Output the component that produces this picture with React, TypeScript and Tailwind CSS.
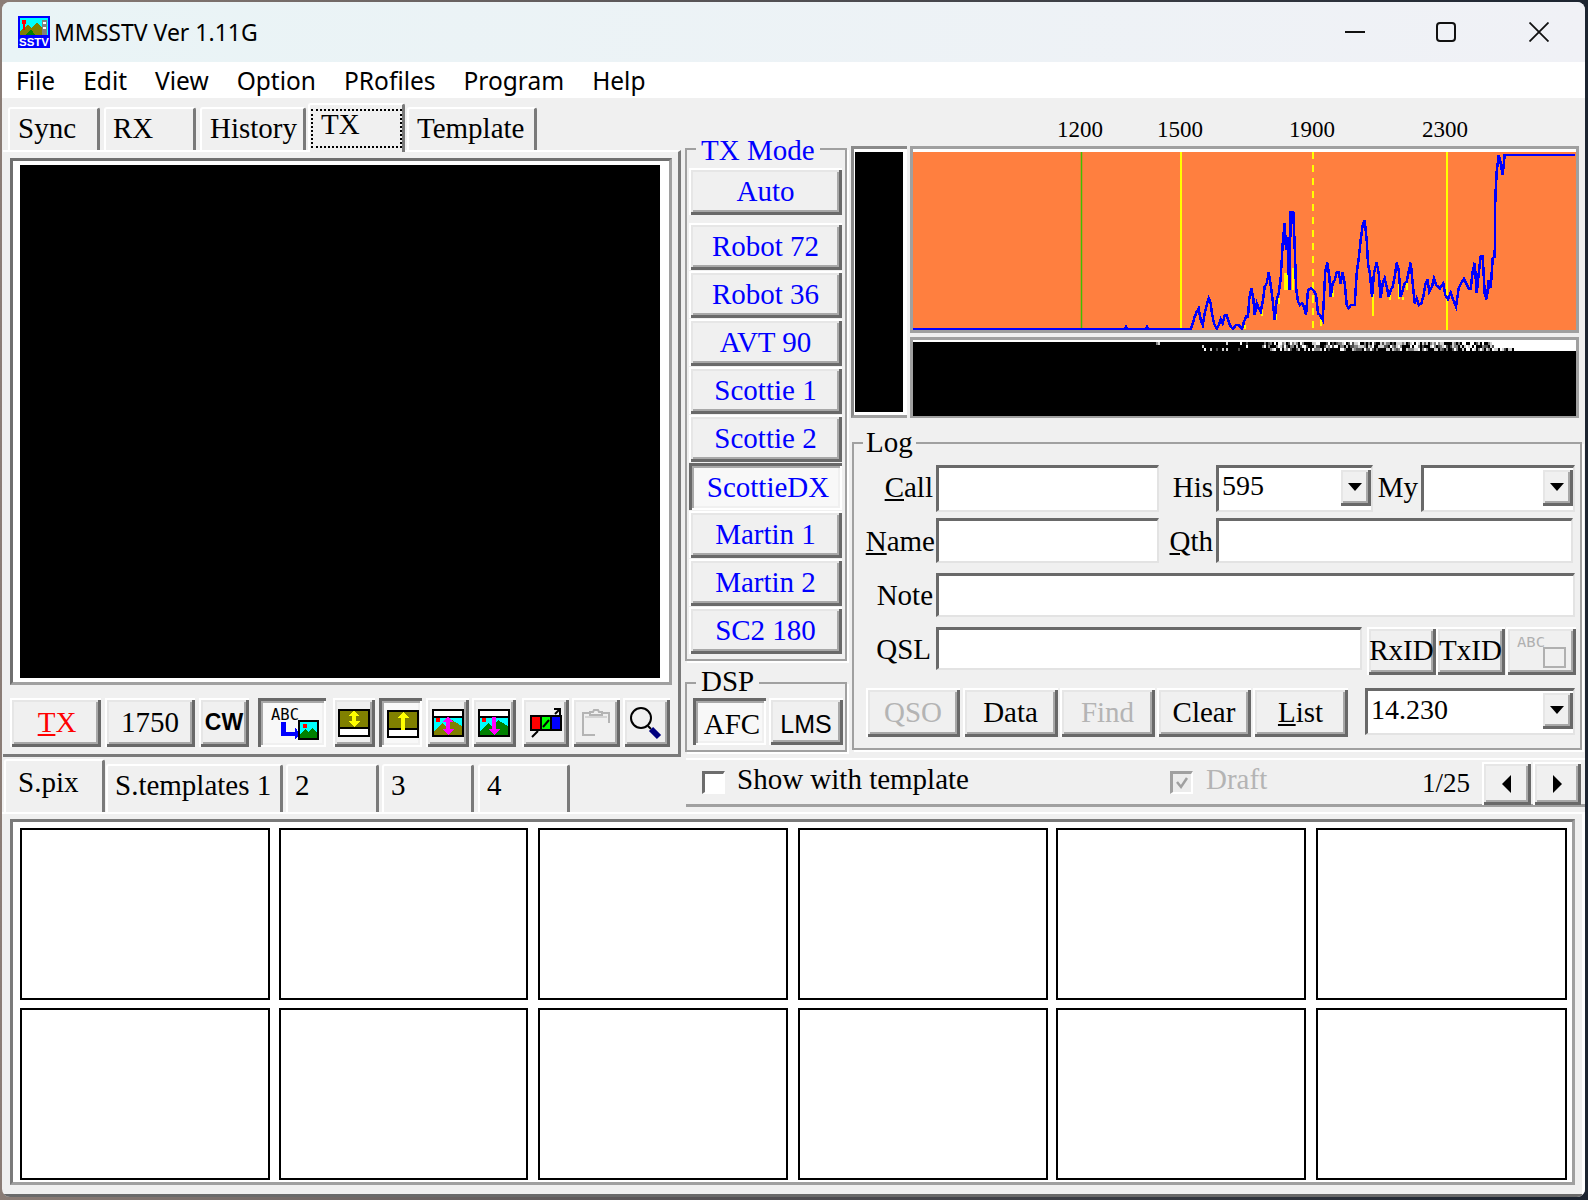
import React from "react";

const raised =
  "bg-[#f0f0f0] shadow-[inset_2px_2px_0_#ffffff,inset_-3px_-3px_0_#696969,inset_4px_4px_0_#e6e6e6,inset_-5px_-5px_0_#a8a8a8]";
const pressed =
  "bg-[#f8f8f8] shadow-[inset_3px_3px_0_#696969,inset_-2px_-2px_0_#ffffff,inset_5px_5px_0_#a8a8a8,inset_-4px_-4px_0_#f0f0f0] pl-[5px] pt-[3px]";
const inset = "bg-white border-t-[3px] border-l-[3px] border-t-[#696969] border-l-[#696969] border-b-2 border-r-2 border-b-[#e3e3e3] border-r-[#e3e3e3]";
const tabBase = "border-t-2 border-l-2 border-t-white border-l-white border-r-[3px] border-r-[#7a7a7a] rounded-t-[3px] flex items-center";
const groupBox = "relative border-2 border-[#a0a0a0] shadow-[2px_2px_0_#ffffff]";
const serif = "font-['Liberation_Serif',serif]";

function Btn({ cls, children, down }: { cls: string; children?: React.ReactNode; down?: boolean }) {
  return <div className={`${cls} ${down ? pressed : raised} flex items-center justify-center shrink-0`}>{children}</div>;
}

function Tri({ dir }: { dir: "down" | "left" | "right" }) {
  const pts = dir === "down" ? "0,0 14,0 7,8" : dir === "left" ? "9,0 9,18 0,9" : "0,0 0,18 9,9";
  const w = dir === "down" ? 14 : 9;
  const h = dir === "down" ? 8 : 18;
  return (
    <svg width={w} height={h} viewBox={`0 0 ${w} ${h}`}>
      <polygon points={pts} fill="#000" />
    </svg>
  );
}

function Combo({ cls, value, textCls }: { cls: string; value?: string; textCls?: string }) {
  return (
    <div className={`${cls} ${inset} flex justify-between shrink-0`}>
      <span className={`pl-[3px] text-[28px] leading-[36px] ${textCls ?? ""}`}>{value}</span>
      <div className={`${raised} w-[32px] h-[38px] flex items-center justify-center`}>
        <Tri dir="down" />
      </div>
    </div>
  );
}

function Label({ cls, children }: { cls: string; children: React.ReactNode }) {
  return <div className={`${cls} text-right shrink-0 leading-[44px]`}>{children}</div>;
}

function Frame({ band, top }: { band: string; top?: boolean }) {
  return (
    <g>
      <rect x="0" y="0" width="32" height="28" fill="#000" />
      <rect x="2" y="2" width="28" height="24" fill={band} />
      {top ? (
        <>
          <rect x="2" y="2" width="28" height="5" fill="#fff" />
          <rect x="2" y="7" width="28" height="2" fill="#000" />
        </>
      ) : (
        <>
          <rect x="2" y="20" width="28" height="6" fill="#fff" />
          <rect x="2" y="18" width="28" height="2" fill="#000" />
        </>
      )}
    </g>
  );
}

function IconAbc() {
  return (
    <svg width="48" height="32" viewBox="0 0 48 32" shapeRendering="crispEdges" className="overflow-visible">
      <text x="0" y="12" fontFamily="DejaVu Sans Mono, monospace" fontSize="15" fill="#000" textLength="28" lengthAdjust="spacingAndGlyphs">ABC</text>
      <path d="M10 14h5v10h9v-5l5 7.500-5 5.500v-4H10z" fill="#0000ff" />
      <rect x="27" y="12" width="21" height="20" fill="#000" />
      <rect x="29" y="14" width="17" height="16" fill="#00ffff" />
      <polygon points="29,30 29,26 34,21 37,24 41,20 46,25 46,30" fill="#008000" />
      <rect x="32" y="16" width="4" height="4" fill="#ff0000" />
    </svg>
  );
}

function IconDouble({ both }: { both?: boolean }) {
  return (
    <svg width="32" height="28" viewBox="0 0 32 28" shapeRendering="crispEdges">
      <Frame band="#808000" top={false} />
      <path d={both ? "M16 2l6 5h-4v5h4l-6 6-6-6h4V7h-4z" : "M16 2l6 6h-4v12h-4V8h-4z"} fill="#ffff00" />
    </svg>
  );
}

function IconPic({ green, both }: { green?: boolean; both?: boolean }) {
  return (
    <svg width="32" height="28" viewBox="0 0 32 28" shapeRendering="crispEdges">
      <Frame band="#00ffff" top />
      <polygon points="2,26 2,23 10,14 14,18 20,11 30,17 30,26" fill={green ? "#008000" : "#808000"} />
      <rect x="4" y="9" width="4" height="4" fill="#ff0000" />
      <path d={both ? "M16 8l6 5h-4v7h4l-6 6-6-6h4v-7h-4z" : "M14 8h4v12h4l-6 6-6-6h4z"} fill="#ff00ff" />
    </svg>
  );
}

function IconRgb() {
  return (
    <svg width="34" height="32" viewBox="0 0 34 32">
      <g shapeRendering="crispEdges">
        <rect x="1" y="8" width="32" height="16" fill="#000" />
        <rect x="3" y="10" width="8" height="12" fill="#ff0000" />
        <rect x="13" y="10" width="8" height="12" fill="#00ff00" />
        <rect x="23" y="10" width="8" height="12" fill="#0000ff" />
      </g>
      <path d="M3 30L9 24M14 20L20 13M26 7L31 2M25 2h6v6" fill="none" stroke="#000" strokeWidth="2" />
    </svg>
  );
}

function IconClip() {
  return (
    <svg width="32" height="28" viewBox="0 0 32 28" fill="none" stroke="#b4b4b4" strokeWidth="2">
      <path d="M10 4H3v22h12M22 4h7v10" />
      <path d="M10 6V3h3l1-2h4l1 2h3v3z" />
      <path d="M5 8h22" stroke="#d4d4d4" />
    </svg>
  );
}

function IconZoom() {
  return (
    <svg width="34" height="34" viewBox="0 0 34 34" className="-ml-[3px]">
      <circle cx="13" cy="12" r="10" fill="none" stroke="#000" strokeWidth="2" />
      <path d="M20 20l3 3" stroke="#000" strokeWidth="2" />
      <path d="M23 23l8 8" stroke="#000080" strokeWidth="6" />
    </svg>
  );
}

function IconAbcDisabled() {
  return (
    <svg width="54" height="34" viewBox="0 0 54 34" className="ml-[3px] overflow-visible">
      <text x="1" y="13" fontFamily="DejaVu Sans Mono, monospace" fontSize="14" fill="#b0b0b0" textLength="28" lengthAdjust="spacingAndGlyphs">ABC</text>
      <rect x="28" y="14" width="21" height="19" fill="none" stroke="#b0b0b0" strokeWidth="2" />
    </svg>
  );
}

function AppIcon() {
  return (
    <svg width="32" height="32" viewBox="0 0 32 32" shapeRendering="crispEdges" className="shrink-0 overflow-visible">
      <rect width="32" height="32" fill="#0000ff" />
      <rect x="2" y="2" width="28" height="17" fill="#00ffff" />
      <polygon points="2,19 2,15 10,9 14,12 19,6 24,12 24,19" fill="#808000" />
      <polygon points="8,19 13,13 17,19" fill="#008000" />
      <rect x="4" y="4" width="4" height="4" fill="#ff0000" />
      <rect x="5" y="8" width="2" height="6" fill="#ff0000" />
      <rect x="24" y="4" width="5" height="15" fill="#808080" />
      <rect x="25" y="6" width="3" height="2" fill="#fff" />
      <rect x="25" y="11" width="3" height="2" fill="#fff" />
      <text x="1" y="30" fontFamily="Liberation Sans, sans-serif" fontWeight="700" fontSize="11" fill="#fff" textLength="30" lengthAdjust="spacingAndGlyphs">SSTV</text>
    </svg>
  );
}

const zoomPts: [number, number][] = [
  [0,567],[32,567],[38,550],[44,530],[50,515],[56,505],[62,540],[68,555],[74,520],[80,495],[86,475],[92,490],[96,520],[102,550],[110,567],[116,555],[122,538],[128,550],[134,525],[140,525],[146,545],[152,560],[160,567],[168,555],[176,555],[186,567],[192,545],[198,530],[204,530],[208,475],[214,445],[220,475],[224,525],[230,490],[236,505],[242,515],[248,485],[254,440],[260,430],[266,398],[272,435],[278,480],[284,540],[290,480],[296,460],[302,415],[308,310],[314,248],[318,330],[322,290],[326,400],[328,450],[332,218],[340,218],[344,320],[348,440],[354,485],[360,495],[366,490],[372,500],[378,525],[384,450],[392,445],[400,450],[408,465],[414,520],[420,525],[428,540],[432,470],[436,392],[442,368],[448,410],[452,470],[458,430],[464,420],[470,398],[476,398],[482,430],[488,398],[494,430],[500,495],[506,505],[512,495],[524,495],[530,400],[536,355],[542,300],[548,255],[554,240],[560,300],[564,370],[570,402],[576,470],[582,400],[590,368],[596,400],[602,475],[608,430],[614,415],[620,440],[626,470],[632,450],[638,440],[644,410],[650,368],[656,390],[662,470],[668,450],[674,430],[680,425],[686,395],[692,368],[698,430],[704,490],[710,475],[716,495],[724,490],[730,470],[736,435],[742,418],[748,455],[756,440],[762,416],[768,435],[780,445],[790,430],[796,465],[804,478],[812,458],[820,480],[828,500],[836,445],[844,428],[852,416],[858,430],[866,445],[872,445],[878,395],[884,368],[890,460],[896,400],[902,350],[908,350],[914,460],[920,478],[926,420],[932,445],[938,355],[944,350],[946,175],[950,95],[956,45],[962,70],[968,105],[974,45],[1184,45],
];
const toX = (p: number) => 1180 + p / 3;
const toY = (p: number) => 140 + p / 3;
const chartLine =
  "913,329 1125,329 1126,327 1127,329 1146,329 1147,327 1148,329 " +
  zoomPts.map(([x, y]) => `${toX(x).toFixed(1)},${toY(y).toFixed(1)}`).join(" ");
const yellowBits: [number, number, number][] = [
  [578, 450, 528], [316, 398, 450], [322, 398, 450], [338, 385, 450], [424, 525, 558], [296, 475, 492], [288, 515, 540],
  [658, 415, 478], [630, 460, 480], [668, 470, 480], [245, 510, 528], [458, 450, 470], [682, 425, 450], [152, 560, 568], [194, 555, 568], [828, 495, 510], [398, 470, 490],
];

function Spectrum() {
  return (
    <svg width="663" height="178" viewBox="913 152 663 178" className="block bg-[#ff7f3f]">
      <line x1="1081.500" y1="152" x2="1081.500" y2="330" stroke="#3fbf00" strokeWidth="1.500" />
      <line x1="1181" y1="152" x2="1181" y2="330" stroke="#ffff00" strokeWidth="2" />
      <line x1="1313" y1="152" x2="1313" y2="330" stroke="#ffff00" strokeWidth="2" strokeDasharray="7 6" />
      <line x1="1447" y1="152" x2="1447" y2="330" stroke="#ffff00" strokeWidth="2" />
      {yellowBits.map(([x, a, b], i) => (
        <line key={i} x1={toX(x)} x2={toX(x)} y1={toY(a)} y2={toY(b)} stroke="#ffff00" strokeWidth="2" shapeRendering="crispEdges" />
      ))}
      <polyline points={chartLine} fill="none" stroke="#0000ff" strokeWidth="2.500" strokeLinejoin="miter" shapeRendering="crispEdges" />
    </svg>
  );
}

function Waterfall() {
  const cells: React.ReactNode[] = [];
  let seed = 12345;
  const rnd = () => {
    seed = (seed * 1103515 + 12345) & 0x7fffffff;
    return seed / 0x7fffffff;
  };
  const shades = ["#ffffff", "#d0d0d0", "#808080", "#505050"];
  for (let x = 1020; x < 1576; x += 2) {
    for (let y = 0; y < 9; y += 3) {
      let p = 0;
      if (x < 1200) p = y === 0 ? 0.03 : 0.01;
      else if (x < 1263) p = 0.18;
      else if (x < 1290) p = 0.6;
      else if (x < 1493) p = 0.65;
      else p = 1;
      if (x >= 1493 && y === 6 && x < 1515) p = 0.6;
      if (rnd() < p) {
        const fill = p === 1 ? "#ffffff" : shades[Math.floor(rnd() * 4)];
        cells.push(<rect key={`${x}-${y}`} x={x - 913} y={y} width="2" height="3" fill={fill} />);
      }
    }
  }
  return (
    <svg width="663" height="74" viewBox="0 0 663 74" className="block bg-black" shapeRendering="crispEdges">
      {cells}
    </svg>
  );
}

const modes = ["Robot 72", "Robot 36", "AVT 90", "Scottie 1", "Scottie 2", "ScottieDX", "Martin 1", "Martin 2", "SC2 180"];

const cellClasses = ["w-[250px]", "w-[249px] ml-[9px]", "w-[250px] ml-[10px]", "w-[250px] ml-[10px]", "w-[250px] ml-[8px]", "w-[251px] ml-[10px]"];

function Checkbox({ disabled }: { disabled?: boolean }) {
  return (
    <div className={`w-[23px] h-[23px] shrink-0 border-t-[3px] border-l-[3px] border-b-2 border-r-2 border-b-white border-r-white flex items-center justify-center ${disabled ? "bg-[#ececec] border-t-[#a0a0a0] border-l-[#a0a0a0]" : "bg-white border-t-[#6d6d6d] border-l-[#6d6d6d]"}`}>
      {disabled && (
        <svg width="14" height="14" viewBox="0 0 14 14">
          <path d="M2 6l4 5 6-9" fill="none" stroke="#a0a0a0" strokeWidth="2.500" />
        </svg>
      )}
    </div>
  );
}

export default function App() {
  return (
    <div className={`w-[1588px] h-[1200px] pt-[2px] pl-[2px] pr-[3px] pb-[3px] bg-linear-to-r from-[#8b7d76] to-[#1c2430] overflow-hidden ${serif} text-[29px] text-black`}>
      <div className="h-full flex flex-col rounded-[8px] overflow-hidden bg-[#f0f0f0]">
        {/* title bar */}
        <div className="h-[60px] shrink-0 flex items-center bg-linear-to-r from-[#e9f4f6] to-[#f0f1f6] pl-[16px] pr-[36px] font-['Noto_Sans',sans-serif]">
          <AppIcon />
          <span className="ml-[4px] text-[23px] leading-none">MMSSTV Ver 1.11G</span>
          <div className="ml-auto flex items-center">
            <svg width="20" height="20" viewBox="0 0 20 20"><path d="M0 10h20" stroke="#111" strokeWidth="2" /></svg>
            <svg width="20" height="20" viewBox="0 0 20 20" className="ml-[71px]"><rect x="1" y="1" width="18" height="18" rx="3" fill="none" stroke="#111" strokeWidth="2" /></svg>
            <svg width="20" height="20" viewBox="0 0 20 20" className="ml-[73px]"><path d="M0.500 0.500l19 19M19.500 0.500l-19 19" stroke="#111" strokeWidth="1.800" /></svg>
          </div>
        </div>
        {/* menu */}
        <div className="h-[36px] shrink-0 bg-white flex items-center pl-[14px] pt-[2px] font-['Noto_Sans',sans-serif] text-[24.500px] leading-none">
          <span>File</span>
          <span className="ml-[28px]">Edit</span>
          <span className="ml-[28px]">View</span>
          <span className="ml-[28px]">Option</span>
          <span className="ml-[28px]">PRofiles</span>
          <span className="ml-[28px]">Program</span>
          <span className="ml-[28px]">Help</span>
        </div>

        {/* upper */}
        <div className="h-[659px] shrink-0 flex">
          {/* left */}
          <div className="w-[681px] shrink-0">
            <div className="h-[52px] pl-[6px] flex items-end">
              <div className={`${tabBase} w-[92px] h-[43px] pl-[8px] pb-[2px]`}>Sync</div>
              <div className={`${tabBase} w-[92px] h-[43px] ml-[4px] pl-[7px] pb-[2px]`}>RX</div>
              <div className={`${tabBase} w-[106px] h-[43px] ml-[4px] pl-[8px] pb-[2px]`}>History</div>
              <div className={`${tabBase} w-[97px] h-[49px] ml-[2px] -mb-[2px] pl-[1px] relative z-10 bg-[#f0f0f0]`}>
                <div className="w-[92px] h-[39px] border-2 border-dotted border-black pl-[8px] leading-[26px]">TX</div>
              </div>
              <div className={`${tabBase} w-[130px] h-[43px] ml-[2px] pl-[8px] pb-[2px]`}>Template</div>
            </div>
            <div className="ml-[1px] w-[678px] h-[607px] border-t-2 border-t-white border-r-[3px] border-r-[#7a7a7a] border-b-[3px] border-b-[#7a7a7a] pl-[7px] pt-[6px]">
              <div className="w-[662px] h-[527px] bg-white border-t-[3px] border-l-[3px] border-t-[#6f6f6f] border-l-[#6f6f6f] border-r-[3px] border-b-[3px] border-r-[#a0a0a0] border-b-[#a0a0a0] pl-[7px] pt-[4px]">
                <div className="w-[640px] h-[513px] bg-black" />
              </div>
              <div className="mt-[13px] flex h-[49px]">
                <Btn cls="w-[91px] h-[49px]"><span className="text-[#ff0000] pl-[3px]"><span className="underline">T</span>X</span></Btn>
                <Btn cls="w-[90px] h-[49px] ml-[4px]">1750</Btn>
                <Btn cls="w-[50px] h-[49px] ml-[4px]"><span className="font-['Liberation_Sans',sans-serif] font-bold text-[23px]">CW</span></Btn>
                <Btn cls="w-[68px] h-[49px] ml-[9px]" down><IconAbc /></Btn>
                <Btn cls="w-[42px] h-[49px] ml-[7px]"><IconDouble both /></Btn>
                <Btn cls="w-[43px] h-[49px] ml-[4px]" down><IconDouble /></Btn>
                <Btn cls="w-[43px] h-[49px] ml-[4px]"><IconPic both /></Btn>
                <Btn cls="w-[44px] h-[49px] ml-[3px]"><IconPic green /></Btn>
                <Btn cls="w-[47px] h-[49px] ml-[6px]"><IconRgb /></Btn>
                <Btn cls="w-[48px] h-[49px] ml-[3px]"><IconClip /></Btn>
                <Btn cls="w-[47px] h-[49px] ml-[3px]"><IconZoom /></Btn>
              </div>
            </div>
          </div>

          {/* mid */}
          <div className="w-[162px] ml-[2px] shrink-0 pt-[50px]">
            <div className={`${groupBox} h-[513px] pt-[18px] pl-[2px]`}>
              <div className="absolute left-[9px] -top-[17px] px-[5px] bg-[#f0f0f0] leading-[34px] text-[#0000ff]">TX Mode</div>
              <Btn cls="w-[153px] h-[47px]"><span className="text-[#0000ff]">Auto</span></Btn>
              <div className="mt-[8px] flex flex-col gap-[1px]">
                {modes.map((m) => (
                  <Btn key={m} cls="w-[153px] h-[47px]" down={m === "ScottieDX"}>
                    <span className="text-[#0000ff]">{m}</span>
                  </Btn>
                ))}
              </div>
            </div>
            <div className={`${groupBox} h-[70px] mt-[21px] pt-[14px] pl-[6px] flex`}>
              <div className="absolute left-[9px] -top-[20px] px-[5px] bg-[#f0f0f0] leading-[34px]">DSP</div>
              <Btn cls="w-[73px] h-[47px]" down><span className="pt-[3px]">AFC</span></Btn>
              <Btn cls="w-[74px] h-[47px] ml-[3px]"><span className="font-['Liberation_Sans',sans-serif] text-[25px] pt-[6px]">LMS</span></Btn>
            </div>
          </div>

          {/* right */}
          <div className="ml-[4px] w-[731px] shrink-0">
            <div className="h-[48px] pt-[16px] flex text-[23px] leading-[31px]">
              <span className="ml-[206px] w-[47px]">1200</span>
              <span className="ml-[53px] w-[47px]">1500</span>
              <span className="ml-[85px] w-[47px]">1900</span>
              <span className="ml-[86px] w-[47px]">2300</span>
            </div>
            <div className="flex h-[272px]">
              <div className="w-[56px] h-[272px] bg-white border-t-[3px] border-l-[3px] border-[#8a8a8a] border-r-0 border-b-[3px] border-b-[#a0a0a0] pt-[3px] pl-[1px]">
                <div className="w-[48px] h-[260px] bg-black" />
              </div>
              <div className="ml-[3px] w-[669px]">
                <div className="h-[187px] bg-white border-[3px] border-[#a0a0a0] pt-[3px]">
                  <Spectrum />
                </div>
                <div className="mt-[4px] h-[81px] bg-white border-[3px] border-[#a0a0a0] border-b-2 pt-[2px]">
                  <Waterfall />
                </div>
              </div>
            </div>

            <div className={`${groupBox} ml-[1px] mt-[24px] w-[730px] h-[308px] pt-[21px]`}>
              <div className="absolute left-[9px] -top-[19px] px-[3px] bg-[#f0f0f0] leading-[34px]">Log</div>
              <div className="flex h-[47px]">
                <Label cls="w-[82px] pr-[3px]"><span className="underline">C</span>all</Label>
                <div className={`${inset} w-[223px] h-[47px] shrink-0`} />
                <Label cls="w-[57px] pr-[3px]">His</Label>
                <Combo cls="w-[157px] h-[47px]" value="595" textCls="pt-0" />
                <Label cls="w-[48px] pr-[3px]">My</Label>
                <Combo cls="w-[154px] h-[47px]" />
              </div>
              <div className="flex h-[45px] mt-[6px]">
                <Label cls="w-[82px] pr-[1px] pt-[1px]"><span className="underline">N</span>ame</Label>
                <div className={`${inset} w-[223px] h-[45px] shrink-0`} />
                <Label cls="w-[57px] pr-[3px] pt-[1px]"><span className="underline">Q</span>th</Label>
                <div className={`${inset} w-[357px] h-[45px] shrink-0`} />
              </div>
              <div className="flex h-[44px] mt-[10px]">
                <Label cls="w-[82px] pr-[3px]">Note</Label>
                <div className={`${inset} w-[639px] h-[44px] shrink-0`} />
              </div>
              <div className="flex h-[48px] mt-[10px]">
                <Label cls="w-[82px] pr-[5px]">QSL</Label>
                <div className={`${inset} w-[426px] h-[43px] shrink-0`} />
                <Btn cls="w-[69px] h-[48px] ml-[5px]">RxID</Btn>
                <Btn cls="w-[69px] h-[48px]">TxID</Btn>
                <Btn cls="w-[70px] h-[48px] ml-[1px]"><IconAbcDisabled /></Btn>
              </div>
              <div className="flex h-[49px] mt-[13px] ml-[12px]">
                <Btn cls="w-[94px] h-[49px]"><span className="text-[#b4b4b4]">QSO</span></Btn>
                <Btn cls="w-[95px] h-[49px] ml-[3px]">Data</Btn>
                <Btn cls="w-[95px] h-[49px] ml-[2px]"><span className="text-[#b4b4b4]">Find</span></Btn>
                <Btn cls="w-[94px] h-[49px] ml-[2px]">Clear</Btn>
                <Btn cls="w-[95px] h-[49px] ml-[2px]"><span><span className="underline">L</span>ist</span></Btn>
                <Combo cls="w-[210px] h-[47px] ml-[17px]" value="14.230" textCls="pt-[1px]" />
              </div>
            </div>
          </div>
        </div>

        {/* second row: lower tabs and options */}
        <div className="h-[55px] shrink-0 flex">
          <div className="w-[684px] shrink-0 flex items-end pl-[2px]">
            <div className={`${tabBase} w-[101px] h-[53px] pl-[12px] pb-[8px]`}>S.pix</div>
            <div className={`${tabBase} w-[177px] h-[48px] ml-[1px] pl-[7px] pb-[6px]`}>S.templates 1</div>
            <div className={`${tabBase} w-[93px] h-[48px] ml-[3px] pl-[7px] pb-[6px]`}>2</div>
            <div className={`${tabBase} w-[92px] h-[48px] ml-[3px] pl-[7px] pb-[6px]`}>3</div>
            <div className={`${tabBase} w-[92px] h-[48px] ml-[4px] pl-[7px] pb-[6px]`}>4</div>
          </div>
          <div className="w-[899px] h-[49px] mt-[1px] border-t-2 border-t-white border-b-[3px] border-b-[#a0a0a0] flex items-center pl-[16px]">
            <Checkbox />
            <span className="ml-[12px] w-[232px] shrink-0 pb-[4px]">Show with template</span>
            <div className="ml-[201px]"><Checkbox disabled /></div>
            <span className="ml-[13px] w-[63px] shrink-0 text-[#b4b4b4] pb-[4px]">Draft</span>
            <span className="ml-[153px] w-[48px] shrink-0 text-[27px] pt-[3px]">1/25</span>
            <Btn cls="w-[49px] h-[43px] ml-[12px] mt-[3px]"><Tri dir="left" /></Btn>
            <Btn cls="w-[48px] h-[43px] ml-[2px] mt-[3px]"><Tri dir="right" /></Btn>
          </div>
        </div>

        {/* bottom */}
        <div className="flex-1 border-t-2 border-t-white border-b-[3px] border-b-[#6a6a6a] border-r-[3px] border-r-white pl-[8px] pt-[5px]">
          <div className="w-[1565px] h-[366px] bg-white border-t-[3px] border-l-[3px] border-t-[#7a7a7a] border-l-[#7a7a7a] border-r-[3px] border-b-[3px] border-r-[#a0a0a0] border-b-[#a0a0a0] pl-[7px] pt-[6px]">
            <div className="flex flex-col gap-[8px]">
              {[0, 1].map((r) => (
                <div key={r} className="flex">
                  {cellClasses.map((c, i) => (
                    <div key={i} className={`${c} h-[172px] shrink-0 border-2 border-black bg-white`} />
                  ))}
                </div>
              ))}
            </div>
          </div>
        </div>
      </div>
    </div>
  );
}
